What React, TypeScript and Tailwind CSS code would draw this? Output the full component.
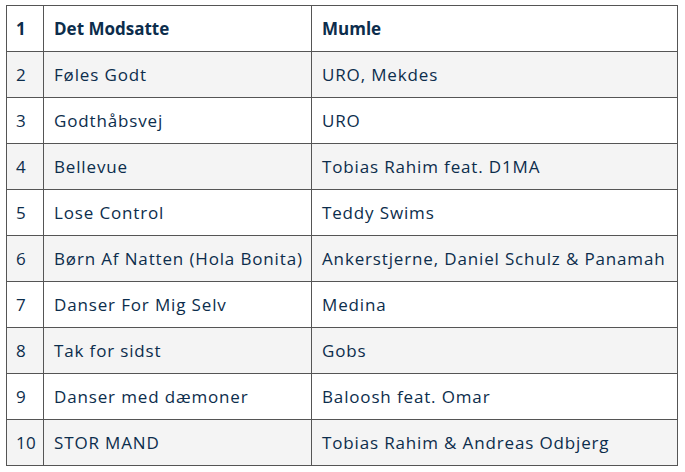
const rows: [string, string, string][] = [
  ['2', 'Føles Godt', 'URO, Mekdes'],
  ['3', 'Godthåbsvej', 'URO'],
  ['4', 'Bellevue', 'Tobias Rahim feat. D1MA'],
  ['5', 'Lose Control', 'Teddy Swims'],
  ['6', 'Børn Af Natten (Hola Bonita)', 'Ankerstjerne, Daniel Schulz & Panamah'],
  ['7', 'Danser For Mig Selv', 'Medina'],
  ['8', 'Tak for sidst', 'Gobs'],
  ['9', 'Danser med dæmoner', 'Baloosh feat. Omar'],
  ['10', 'STOR MAND', 'Tobias Rahim & Andreas Odbjerg'],
]

export default function App() {
  return (
    <div className="w-[685px] h-[472px] bg-white pl-[6px] pt-[5px] font-['Open_Sans',sans-serif] text-[#0c2d4c]">
      <table className="border-collapse table-fixed w-[671px]">
        <colgroup>
          <col className="w-[37px]" />
          <col className="w-[268px]" />
          <col className="w-[366px]" />
        </colgroup>
        <tbody>
          <tr className="h-[46px] bg-white">
            <td className="border border-[#555] px-[9px] text-[17px] font-bold">1</td>
            <td className="border border-[#555] px-[10px] text-[17px] font-bold">Det Modsatte</td>
            <td className="border border-[#555] px-[10px] text-[17px] font-bold">Mumle</td>
          </tr>
          {rows.map((r, i) => (
            <tr key={r[0]} className={i % 2 === 0 ? 'h-[46px] bg-[#f4f4f4]' : 'h-[46px] bg-white'}>
              <td className="border border-[#555] px-[9px] text-[17px] tracking-[0.3px] whitespace-nowrap">{r[0]}</td>
              <td className="border border-[#555] px-[10px] text-[17px] tracking-[0.85px] whitespace-nowrap">{r[1]}</td>
              <td className="border border-[#555] px-[10px] text-[17px] tracking-[0.85px] whitespace-nowrap">{r[2]}</td>
            </tr>
          ))}
        </tbody>
      </table>
    </div>
  )
}
